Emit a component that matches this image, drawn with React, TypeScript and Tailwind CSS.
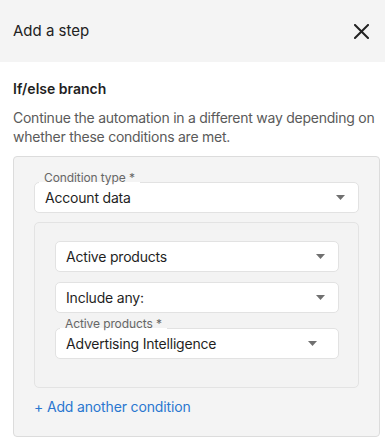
// Small grey triangle used by every select
function Caret() {
  return (
    <svg width="9" height="5" viewBox="0 0 9 5" className="shrink-0">
      <path d="M0 0 L9 0 L4.5 5 Z" fill="#707070" />
    </svg>
  )
}

type SelectProps = {
  value: string
  label?: string
  labelBg?: string
  caretPad?: string
}

function Select({ value, label, labelBg = "", caretPad = "pr-[13px]" }: SelectProps) {
  return (
    <div className="relative">
      {label && (
        <span
          className={`absolute left-[5px] -top-[11px] px-[5px] text-[12px] leading-[14px] tracking-[-0.1px] text-[#666] ${labelBg}`}
        >
          {label}
        </span>
      )}
      <div
        className={`h-[31px] flex items-center justify-between pl-[10px] ${caretPad} bg-white border border-[#e2e2e2] rounded-[5px] text-[14px] tracking-[-0.2px] text-[#1f1f1f]`}
      >
        <span>{value}</span>
        <Caret />
      </div>
    </div>
  )
}

export default function App() {
  return (
    <div className="w-[385px] h-[441px] bg-white overflow-hidden font-['Inter',_'Liberation_Sans',_sans-serif]">
      {/* HEADER */}
      <div className="h-[62px] bg-[#f4f4f4] flex items-center justify-between pl-[13px] pr-[16px]">
        <span className="text-[15px] text-[#222]">Add a step</span>
        <svg width="15" height="15" viewBox="0 0 15 15">
          <path d="M1 1 L14 14 M14 1 L1 14" stroke="#222" strokeWidth="2" strokeLinecap="square" />
        </svg>
      </div>

      {/* BODY */}
      <div className="pl-[13px] pr-[5px] pt-[17px]">
        <h2 className="text-[14px] leading-[20px] font-semibold text-[#1f1f1f]">If/else branch</h2>
        <p className="mt-[9px] text-[14px] leading-[19px] tracking-[-0.25px] text-[#5a5a5a]">
          Continue the automation in a different way depending on whether these conditions are met.
        </p>

        <div className="mt-[10px] h-[281px] bg-[#f4f4f4] border border-[#dcdcdc] rounded-[4px] pl-[20px] pr-[20px] pt-[25px]">
          <Select
            value="Account data"
            label="Condition type *"
            labelBg="bg-[linear-gradient(to_bottom,#f4f4f4_11px,#ffffff_11px)]"
            caretPad="pr-[13px]"
          />

          <div className="mt-[9px] bg-[#f3f3f3] border border-[#e3e3e3] rounded-[5px] pl-[20px] pr-[19px] pt-[18px] pb-[28px] flex flex-col">
            <Select value="Active products" />
            <div className="mt-[10px]">
              <Select value="Include any:" />
            </div>
            <div className="mt-[15px]">
              <Select
                value="Advertising Intelligence"
                label="Active products *"
                labelBg="bg-[linear-gradient(to_bottom,#f3f3f3_11px,#ffffff_11px)]"
                caretPad="pr-[21px]"
              />
            </div>
          </div>

          <div className="mt-[9px] text-[14px] leading-[20px] tracking-[-0.15px] text-[#2a77d0]">+ Add another condition</div>
        </div>
      </div>
    </div>
  )
}
